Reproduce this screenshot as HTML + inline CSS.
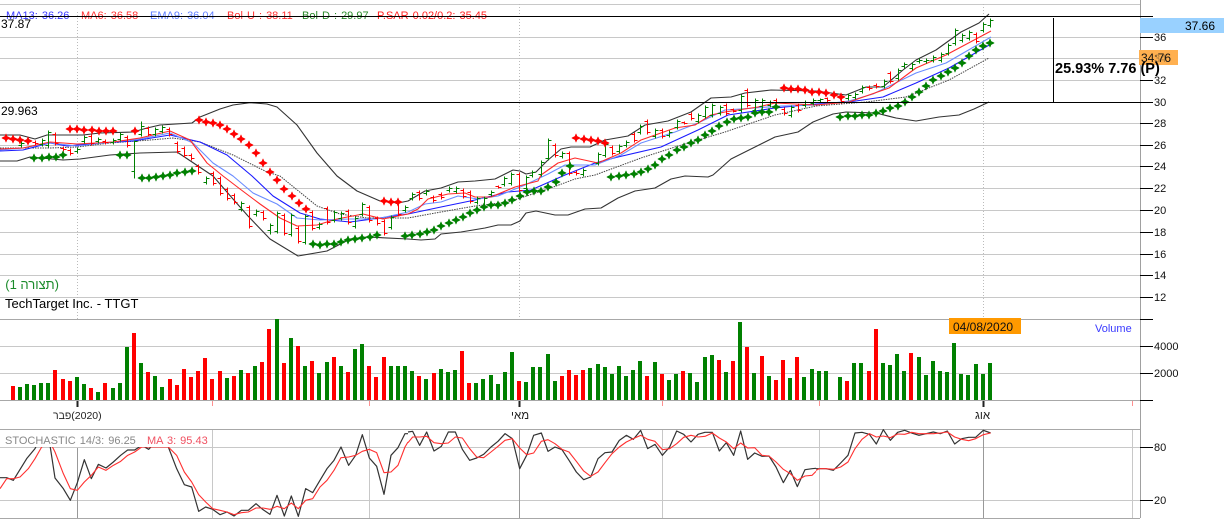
<!DOCTYPE html>
<html>
<head>
<meta charset="utf-8">
<style>
html,body{margin:0;padding:0;background:#fff;width:1224px;height:528px;overflow:hidden}
svg{display:block;font-family:"Liberation Sans",sans-serif}
.nv{vector-effect:non-scaling-stroke;fill:none}
.ax text{font-size:11px;fill:#111}
.lg{font-size:11px;word-spacing:1px}
</style>
</head>
<body>
<svg width="1224" height="528" viewBox="0 0 1224 528" xmlns="http://www.w3.org/2000/svg">
<rect width="1224" height="528" fill="#fff"/>

<!-- grid -->
<g shape-rendering="crispEdges" fill="none">
<path stroke="#c8c8c8" d="M0 4.5H1140M0 37.5H1140M0 58.5H1140M0 80.5H1140M0 123.5H1140M0 145.5H1140M0 166.5H1140M0 188.5H1140M0 210.5H1140M0 232.5H1140M0 254.5H1140M0 275.5H1140M0 297.5H1140M0 346.5H1140M0 373.5H1140"/>
<path stroke="#a8a8a8" d="M0 319.5H1140M0 400.5H1140M0 518.5H1140M0 429.5H1140"/>
<path stroke="#bbb" stroke-dasharray="1 2" d="M77.5 12V319M519.5 4V319M983.5 4V319"/>
</g>

<!-- volume -->
<g shape-rendering="crispEdges">
<path fill="#ff0000" d="M11 386h4V400h-4zM53 370h4V400h-4zM61 379h4V400h-4zM68 381h4V400h-4zM89 388h4V400h-4zM103 383h4V400h-4zM132 333h4V400h-4zM146 372h4V400h-4zM168 379h4V400h-4zM175 385h4V400h-4zM182 369h4V400h-4zM189 377h4V400h-4zM196 371h4V400h-4zM203 358h4V400h-4zM210 379h4V400h-4zM218 371h4V400h-4zM232 376h4V400h-4zM246 373h4V400h-4zM260 362h4V400h-4zM267 329h4V400h-4zM282 363h4V400h-4zM296 346h4V400h-4zM310 361h4V400h-4zM332 357h4V400h-4zM346 372h4V400h-4zM367 366h4V400h-4zM374 377h4V400h-4zM382 357h4V400h-4zM417 376h4V400h-4zM432 373h4V400h-4zM460 351h4V400h-4zM467 383h4V400h-4zM517 381h4V400h-4zM560 376h4V400h-4zM567 370h4V400h-4zM574 375h4V400h-4zM581 370h4V400h-4zM645 376h4V400h-4zM660 374h4V400h-4zM681 371h4V400h-4zM717 360h4V400h-4zM731 361h4V400h-4zM745 347h4V400h-4zM760 356h4V400h-4zM774 380h4V400h-4zM781 360h4V400h-4zM795 357h4V400h-4zM845 381h4V400h-4zM867 371h4V400h-4zM874 329h4V400h-4zM909 353h4V400h-4z"/>
<path fill="#008000" d="M18 387h4V400h-4zM25 384h4V400h-4zM32 385h4V400h-4zM39 383h4V400h-4zM46 383h4V400h-4zM75 377h4V400h-4zM82 384h4V400h-4zM96 392h4V400h-4zM111 388h4V400h-4zM118 383h4V400h-4zM125 347h4V400h-4zM139 363h4V400h-4zM153 376h4V400h-4zM160 387h4V400h-4zM225 378h4V400h-4zM239 370h4V400h-4zM253 366h4V400h-4zM275 319h4V400h-4zM289 338h4V400h-4zM303 366h4V400h-4zM317 373h4V400h-4zM325 362h4V400h-4zM339 366h4V400h-4zM353 349h4V400h-4zM360 344h4V400h-4zM389 366h4V400h-4zM396 366h4V400h-4zM403 366h4V400h-4zM410 371h4V400h-4zM424 379h4V400h-4zM439 369h4V400h-4zM446 372h4V400h-4zM453 370h4V400h-4zM474 383h4V400h-4zM481 379h4V400h-4zM489 375h4V400h-4zM496 384h4V400h-4zM503 372h4V400h-4zM510 352h4V400h-4zM524 382h4V400h-4zM531 367h4V400h-4zM538 367h4V400h-4zM546 354h4V400h-4zM553 381h4V400h-4zM588 368h4V400h-4zM596 364h4V400h-4zM603 367h4V400h-4zM610 374h4V400h-4zM617 366h4V400h-4zM624 376h4V400h-4zM631 370h4V400h-4zM638 361h4V400h-4zM653 362h4V400h-4zM667 380h4V400h-4zM674 374h4V400h-4zM688 373h4V400h-4zM695 382h4V400h-4zM703 357h4V400h-4zM710 355h4V400h-4zM724 372h4V400h-4zM738 322h4V400h-4zM752 373h4V400h-4zM767 376h4V400h-4zM788 378h4V400h-4zM802 377h4V400h-4zM810 369h4V400h-4zM817 371h4V400h-4zM824 371h4V400h-4zM838 377h4V400h-4zM852 363h4V400h-4zM859 363h4V400h-4zM881 363h4V400h-4zM888 365h4V400h-4zM895 354h4V400h-4zM902 371h4V400h-4zM917 357h4V400h-4zM924 375h4V400h-4zM931 361h4V400h-4zM938 371h4V400h-4zM945 372h4V400h-4zM952 343h4V400h-4zM959 374h4V400h-4zM966 375h4V400h-4zM974 364h4V400h-4zM981 374h4V400h-4zM988 363h4V400h-4z"/>
</g>

<!-- bollinger + averages -->
<g fill="none" stroke-linejoin="round">
<polyline stroke="#333" stroke-width="1.1" points="0,135 20,135 35,139 47,135 70,135 83,135 100,133 133,132 147,128 160,125 192,123 200,117 220,109 233,105 250,102.7 267,104 277,107 297,125 317,153 337,176 357,191 380,201 398,203 408,201 425,191 441,188 458,182 475,181 495,179 503,175 513,170 520,171 526,174 536,172 548,160 561,149 571,147 590,147 605,140 628,136 645,125 668,121 691,112 711,98 731,97 745,93 771,90 816,91 846,95 866,87 883,87 903,70 916,60 936,50 961,32 979,23 989,14"/>
<polyline stroke="#333" stroke-width="1.1" points="0,161 17,161 30,157 63,160 80,159 110,155 140,153 177,152 213,176 233,199 248,216 270,239 298,256 327,251 350,239 367,237 408,239 421,240 435,239 441,234 461,232 485,228 498,225 511,225 520,221 526,213 536,211 555,215 568,215 585,209 601,208 618,198 635,191 655,188 671,179 685,176 708,177 713,175 731,159 755,147 775,137 798,132 813,122 833,114 846,112 876,113 896,118 916,121 939,117 959,115 974,109 989,102"/>
<polyline stroke="#444" stroke-width="1" stroke-dasharray="1.5 1" points="0,148 20,148 50,148 77,147 110,143 150,140 173,138 200,142 233,155 267,172 280,176 317,206 340,214 367,218 408,218 441,212 475,206 508,202 548,189 575,179 595,175 641,158 675,147 725,132 775,115 816,106 866,102 906,97 949,80 989,58"/>
<polyline stroke="#1a1aff" stroke-width="1.1" points="0,151 23,150 50,143 67,146 100,143 133,141 170,135 200,142 227,155 252,176 273,196 300,213 320,219 350,222 373,219 408,214 441,207 475,200 508,192 531,190 565,175 595,163 618,157 661,147 698,130 728,115 775,108 816,104 849,102 883,97 916,83 949,68 991,44"/>
<polyline stroke="#6a8cff" stroke-width="1.1" points="0,150 23,148 50,143 77,146 113,142 140,139 170,133 193,143 213,163 233,176 253,193 277,204 297,218 320,220 350,219 377,219 408,212 425,204 441,202 458,196 478,199 498,196 525,185 548,174 565,165 595,165 621,155 641,143 675,132 698,123 725,110 755,108 781,106 816,105 849,101 873,94 916,73 946,63 991,37"/>
<polyline stroke="#ff2a2a" stroke-width="1.1" points="0,149 23,148 50,142 77,144 113,142 140,138 170,131 190,140 207,163 223,176 240,189 260,204 280,218 297,226 317,225 337,219 363,214 383,219 408,214 418,209 428,199 448,194 465,193 475,197 491,197 515,187 538,181 541,175 558,163 575,158 598,163 621,153 641,140 675,128 695,125 711,115 725,112 758,107 775,103 816,105 849,102 889,88 916,68 946,55 991,31"/>
</g>

<!-- OHLC -->
<g fill="none" shape-rendering="crispEdges" stroke-width="1">
<path stroke="#008000" transform="translate(.5 .5)" d="M21 141V147M18 145h3M21 143h3M42 138V146M39 144h3M42 140h3M48 130V147M45 145h3M48 132h3M77 147V153M74 151h3M77 149h3M84 135V143M81 141h3M84 137h3M98 137V143M95 141h3M98 139h3M113 138V144M110 142h3M113 140h3M120 132V141M117 139h3M120 134h3M134 140V178M131 171h3M134 141h3M141 121V136M138 134h3M141 126h3M155 127V136M152 134h3M155 129h3M162 125V133M159 131h3M162 127h3M206 176V184M203 182h3M206 178h3M241 201V211M238 209h3M241 203h3M256 209V216M253 214h3M256 211h3M270 223V234M267 230h3M270 225h3M277 211V233M274 231h3M277 213h3M291 213V236M288 234h3M291 215h3M305 214V244M302 242h3M305 216h3M319 222V229M316 227h3M319 224h3M334 210V222M331 220h3M334 212h3M341 211V220M338 218h3M341 213h3M355 216V228M352 226h3M355 218h3M362 202V216M359 214h3M362 204h3M391 215V229M388 227h3M391 217h3M405 205V212M402 210h3M405 207h3M412 192V200M409 198h3M412 194h3M426 189V195M423 193h3M426 191h3M449 186V192M446 190h3M449 188h3M456 186V193M453 191h3M456 188h3M477 196V204M474 202h3M477 198h3M484 196V208M481 206h3M484 198h3M491 190V196M488 194h3M491 192h3M504 176V186M501 184h3M504 178h3M511 172V185M508 183h3M511 174h3M526 175V190M523 188h3M526 177h3M532 170V177M529 175h3M532 172h3M541 160V176M538 174h3M541 162h3M548 138V160M545 158h3M548 140h3M562 151V158M559 156h3M562 153h3M583 168V176M580 174h3M583 170h3M598 152V165M595 163h3M598 154h3M605 142V157M602 155h3M605 144h3M619 144V153M616 151h3M619 146h3M626 140V147M623 145h3M626 142h3M640 124V134M637 132h3M640 126h3M655 128V138M652 136h3M655 130h3M669 130V137M666 135h3M669 132h3M677 119V129M674 127h3M677 121h3M698 113V123M695 121h3M698 115h3M705 105V118M702 116h3M705 107h3M712 103V117M709 115h3M712 105h3M720 105V115M717 113h3M720 107h3M741 94V112M738 110h3M741 96h3M755 98V112M752 110h3M755 100h3M762 98V108M759 106h3M762 100h3M770 100V107M767 105h3M770 102h3M791 105V117M788 115h3M791 107h3M805 100V107M802 105h3M805 102h3M813 98V105M810 103h3M813 100h3M820 98V102M817 100h3M820 99h3M848 93V100M845 98h3M848 95h3M855 92V99M852 97h3M855 94h3M862 85V93M859 91h3M862 87h3M884 79V88M881 86h3M884 81h3M898 68V80M895 78h3M898 70h3M904 62V68M901 66h3M904 64h3M912 62V70M909 68h3M912 64h3M919 58V63M916 61h3M919 60h3M926 58V63M923 61h3M926 60h3M933 55V62M930 60h3M933 57h3M941 52V62M938 60h3M941 54h3M948 43V55M945 53h3M948 45h3M955 28V45M952 43h3M955 30h3M962 33V42M959 40h3M962 35h3M969 30V40M966 38h3M969 32h3M983 22V32M980 30h3M983 24h3M990 18V27M987 25h3M990 20h3"/>
<path stroke="#ff0000" transform="translate(.5 .5)" d="M35 140V145M32 142h3M35 143h3M55 132V145M52 134h3M55 143h3M63 146V151M60 148h3M63 149h3M70 148V155M67 150h3M70 153h3M91 134V145M88 136h3M91 143h3M105 139V144M102 141h3M105 142h3M127 135V147M124 137h3M127 145h3M148 126V136M145 128h3M148 134h3M169 127V136M166 129h3M169 134h3M177 141V153M174 143h3M177 151h3M184 146V157M181 148h3M184 155h3M191 153V160M188 155h3M191 158h3M198 164V174M195 166h3M198 172h3M213 171V185M210 173h3M213 183h3M220 176V195M217 178h3M220 193h3M227 187V200M224 189h3M227 198h3M234 193V204M231 195h3M234 202h3M249 205V228M246 207h3M249 226h3M263 210V220M260 212h3M263 218h3M284 213V235M281 215h3M284 233h3M298 226V243M295 228h3M298 241h3M312 210V230M309 212h3M312 228h3M327 206V224M324 208h3M327 222h3M348 209V224M345 211h3M348 222h3M369 205V222M366 207h3M369 220h3M377 216V225M374 218h3M377 223h3M384 219V235M381 221h3M384 233h3M398 201V216M395 203h3M398 214h3M419 190V200M416 192h3M419 198h3M433 195V202M430 197h3M433 200h3M441 192V199M438 194h3M441 197h3M463 188V198M460 190h3M463 196h3M470 190V203M467 192h3M470 201h3M498 185V188M495 186h3M498 187h3M519 172V192M516 174h3M519 190h3M555 143V157M552 145h3M555 155h3M569 151V175M566 153h3M569 173h3M576 170V175M573 172h3M576 173h3M612 145V155M609 147h3M612 153h3M634 132V142M631 134h3M634 140h3M647 119V134M644 121h3M647 132h3M662 128V138M659 130h3M662 136h3M684 121V124M681 122h3M684 123h3M691 112V120M688 114h3M691 118h3M726 103V115M723 105h3M726 113h3M733 108V112M730 109h3M733 111h3M747 88V107M744 90h3M747 105h3M776 98V108M773 100h3M776 106h3M784 107V115M781 109h3M784 113h3M798 103V112M795 105h3M798 110h3M827 97V102M824 98h3M827 100h3M841 95V103M838 97h3M841 101h3M869 85V90M866 87h3M869 88h3M876 83V88M873 85h3M876 86h3M890 71V83M887 73h3M890 81h3M976 32V43M973 34h3M976 41h3"/>
</g>

<!-- SAR -->
<g stroke-width=".7" stroke-linejoin="round">
<path fill="#ff0000" stroke="#ff0000" d="M6 134l1 2.500 3 1.500-3 1.500-1 2.500-1-2.500-3-1.500 3-1.500zM13 135l1 2.500 3 1.500-3 1.500-1 2.500-1-2.500-3-1.500 3-1.500zM20 136l1 2.500 3 1.500-3 1.500-1 2.500-1-2.500-3-1.500 3-1.500zM28 137l1 2.500 3 1.500-3 1.500-1 2.500-1-2.500-3-1.500 3-1.500zM70 125l1 2.500 3 1.500-3 1.500-1 2.500-1-2.500-3-1.500 3-1.500zM77 125l1 2.500 3 1.500-3 1.500-1 2.500-1-2.500-3-1.500 3-1.500zM84 126l1 2.500 3 1.500-3 1.500-1 2.500-1-2.500-3-1.500 3-1.500zM92 126l1 2.500 3 1.500-3 1.500-1 2.500-1-2.500-3-1.500 3-1.500zM99 127l1 2.500 3 1.500-3 1.500-1 2.500-1-2.500-3-1.500 3-1.500zM106 127l1 2.500 3 1.500-3 1.500-1 2.500-1-2.500-3-1.500 3-1.500zM113 127l1 2.500 3 1.500-3 1.500-1 2.500-1-2.500-3-1.500 3-1.500zM135 127l1 2.500 3 1.500-3 1.500-1 2.500-1-2.500-3-1.500 3-1.500zM199 116l1 2.500 3 1.500-3 1.500-1 2.500-1-2.500-3-1.500 3-1.500zM206 118l1 2.500 3 1.500-3 1.500-1 2.500-1-2.500-3-1.500 3-1.500zM213 119l1 2.500 3 1.500-3 1.500-1 2.500-1-2.500-3-1.500 3-1.500zM220 121l1 2.500 3 1.500-3 1.500-1 2.500-1-2.500-3-1.500 3-1.500zM227 125l1 2.500 3 1.500-3 1.500-1 2.500-1-2.500-3-1.500 3-1.500zM234 130l1 2.500 3 1.500-3 1.500-1 2.500-1-2.500-3-1.500 3-1.500zM241 135l1 2.500 3 1.500-3 1.500-1 2.500-1-2.500-3-1.500 3-1.500zM249 141l1 2.500 3 1.500-3 1.500-1 2.500-1-2.500-3-1.500 3-1.500zM256 149l1 2.500 3 1.500-3 1.500-1 2.500-1-2.500-3-1.500 3-1.500zM263 159l1 2.500 3 1.500-3 1.500-1 2.500-1-2.500-3-1.500 3-1.500zM270 168l1 2.500 3 1.500-3 1.500-1 2.500-1-2.500-3-1.500 3-1.500zM277 176l1 2.500 3 1.500-3 1.500-1 2.500-1-2.500-3-1.500 3-1.500zM284 185l1 2.500 3 1.500-3 1.500-1 2.500-1-2.500-3-1.500 3-1.500zM292 192l1 2.500 3 1.500-3 1.500-1 2.500-1-2.500-3-1.500 3-1.500zM299 199l1 2.500 3 1.500-3 1.500-1 2.500-1-2.500-3-1.500 3-1.500zM306 205l1 2.500 3 1.500-3 1.500-1 2.500-1-2.500-3-1.500 3-1.500zM384 197l1 2.500 3 1.500-3 1.500-1 2.500-1-2.500-3-1.500 3-1.500zM391 198l1 2.500 3 1.500-3 1.500-1 2.500-1-2.500-3-1.500 3-1.500zM398 198l1 2.500 3 1.500-3 1.500-1 2.500-1-2.500-3-1.500 3-1.500zM576 134l1 2.500 3 1.500-3 1.500-1 2.500-1-2.500-3-1.500 3-1.500zM584 135l1 2.500 3 1.500-3 1.500-1 2.500-1-2.500-3-1.500 3-1.500zM591 136l1 2.500 3 1.500-3 1.500-1 2.500-1-2.500-3-1.500 3-1.500zM598 137l1 2.500 3 1.500-3 1.500-1 2.500-1-2.500-3-1.500 3-1.500zM605 139l1 2.500 3 1.500-3 1.500-1 2.500-1-2.500-3-1.500 3-1.500zM784 84l1 2.500 3 1.500-3 1.500-1 2.500-1-2.500-3-1.500 3-1.500zM791 85l1 2.500 3 1.500-3 1.500-1 2.500-1-2.500-3-1.500 3-1.500zM798 85l1 2.500 3 1.500-3 1.500-1 2.500-1-2.500-3-1.500 3-1.500zM805 86l1 2.500 3 1.500-3 1.500-1 2.500-1-2.500-3-1.500 3-1.500zM812 88l1 2.500 3 1.500-3 1.500-1 2.500-1-2.500-3-1.500 3-1.500zM819 88l1 2.500 3 1.500-3 1.500-1 2.500-1-2.500-3-1.500 3-1.500zM826 89l1 2.500 3 1.500-3 1.500-1 2.500-1-2.500-3-1.500 3-1.500zM834 91l1 2.500 3 1.500-3 1.500-1 2.500-1-2.500-3-1.500 3-1.500zM841 93l1 2.500 3 1.500-3 1.500-1 2.500-1-2.500-3-1.500 3-1.500z"/>
<path fill="#008000" stroke="#008000" d="M34 154l1 2.500 3 1.500-3 1.500-1 2.500-1-2.500-3-1.500 3-1.500zM42 154l1 2.500 3 1.500-3 1.500-1 2.500-1-2.500-3-1.500 3-1.500zM49 153l1 2.500 3 1.500-3 1.500-1 2.500-1-2.500-3-1.500 3-1.500zM56 153l1 2.500 3 1.500-3 1.500-1 2.500-1-2.500-3-1.500 3-1.500zM63 151l1 2.500 3 1.500-3 1.500-1 2.500-1-2.500-3-1.500 3-1.500zM120 151l1 2.500 3 1.500-3 1.500-1 2.500-1-2.500-3-1.500 3-1.500zM127 151l1 2.500 3 1.500-3 1.500-1 2.500-1-2.500-3-1.500 3-1.500zM142 174l1 2.500 3 1.500-3 1.500-1 2.500-1-2.500-3-1.500 3-1.500zM149 174l1 2.500 3 1.500-3 1.500-1 2.500-1-2.500-3-1.500 3-1.500zM156 173l1 2.500 3 1.500-3 1.500-1 2.500-1-2.500-3-1.500 3-1.500zM163 172l1 2.500 3 1.500-3 1.500-1 2.500-1-2.500-3-1.500 3-1.500zM170 171l1 2.500 3 1.500-3 1.500-1 2.500-1-2.500-3-1.500 3-1.500zM177 169l1 2.500 3 1.500-3 1.500-1 2.500-1-2.500-3-1.500 3-1.500zM185 168l1 2.500 3 1.500-3 1.500-1 2.500-1-2.500-3-1.500 3-1.500zM192 167l1 2.500 3 1.500-3 1.500-1 2.500-1-2.500-3-1.500 3-1.500zM313 240l1 2.500 3 1.500-3 1.500-1 2.500-1-2.500-3-1.500 3-1.500zM320 241l1 2.500 3 1.500-3 1.500-1 2.500-1-2.500-3-1.500 3-1.500zM327 240l1 2.500 3 1.500-3 1.500-1 2.500-1-2.500-3-1.500 3-1.500zM334 240l1 2.500 3 1.500-3 1.500-1 2.500-1-2.500-3-1.500 3-1.500zM341 238l1 2.500 3 1.500-3 1.500-1 2.500-1-2.500-3-1.500 3-1.500zM348 236l1 2.500 3 1.500-3 1.500-1 2.500-1-2.500-3-1.500 3-1.500zM355 235l1 2.500 3 1.500-3 1.500-1 2.500-1-2.500-3-1.500 3-1.500zM362 234l1 2.500 3 1.500-3 1.500-1 2.500-1-2.500-3-1.500 3-1.500zM370 233l1 2.500 3 1.500-3 1.500-1 2.500-1-2.500-3-1.500 3-1.500zM377 231l1 2.500 3 1.500-3 1.500-1 2.500-1-2.500-3-1.500 3-1.500zM405 232l1 2.500 3 1.500-3 1.500-1 2.500-1-2.500-3-1.500 3-1.500zM412 231l1 2.500 3 1.500-3 1.500-1 2.500-1-2.500-3-1.500 3-1.500zM420 230l1 2.500 3 1.500-3 1.500-1 2.500-1-2.500-3-1.500 3-1.500zM427 228l1 2.500 3 1.500-3 1.500-1 2.500-1-2.500-3-1.500 3-1.500zM434 226l1 2.500 3 1.500-3 1.500-1 2.500-1-2.500-3-1.500 3-1.500zM441 222l1 2.500 3 1.500-3 1.500-1 2.500-1-2.500-3-1.500 3-1.500zM449 219l1 2.500 3 1.500-3 1.500-1 2.500-1-2.500-3-1.500 3-1.500zM456 216l1 2.500 3 1.500-3 1.500-1 2.500-1-2.500-3-1.500 3-1.500zM463 213l1 2.500 3 1.500-3 1.500-1 2.500-1-2.500-3-1.500 3-1.500zM470 209l1 2.500 3 1.500-3 1.500-1 2.500-1-2.500-3-1.500 3-1.500zM477 206l1 2.500 3 1.500-3 1.500-1 2.500-1-2.500-3-1.500 3-1.500zM484 203l1 2.500 3 1.500-3 1.500-1 2.500-1-2.500-3-1.500 3-1.500zM491 201l1 2.500 3 1.500-3 1.500-1 2.500-1-2.500-3-1.500 3-1.500zM498 201l1 2.500 3 1.500-3 1.500-1 2.500-1-2.500-3-1.500 3-1.500zM505 199l1 2.500 3 1.500-3 1.500-1 2.500-1-2.500-3-1.500 3-1.500zM512 196l1 2.500 3 1.500-3 1.500-1 2.500-1-2.500-3-1.500 3-1.500zM520 192l1 2.500 3 1.500-3 1.500-1 2.500-1-2.500-3-1.500 3-1.500zM527 188l1 2.500 3 1.500-3 1.500-1 2.500-1-2.500-3-1.500 3-1.500zM534 187l1 2.500 3 1.500-3 1.500-1 2.500-1-2.500-3-1.500 3-1.500zM541 187l1 2.500 3 1.500-3 1.500-1 2.500-1-2.500-3-1.500 3-1.500zM548 183l1 2.500 3 1.500-3 1.500-1 2.500-1-2.500-3-1.500 3-1.500zM556 178l1 2.500 3 1.500-3 1.500-1 2.500-1-2.500-3-1.500 3-1.500zM562 169l1 2.500 3 1.500-3 1.500-1 2.500-1-2.500-3-1.500 3-1.500zM570 162l1 2.500 3 1.500-3 1.500-1 2.500-1-2.500-3-1.500 3-1.500zM611 173l1 2.500 3 1.500-3 1.500-1 2.500-1-2.500-3-1.500 3-1.500zM619 172l1 2.500 3 1.500-3 1.500-1 2.500-1-2.500-3-1.500 3-1.500zM626 171l1 2.500 3 1.500-3 1.500-1 2.500-1-2.500-3-1.500 3-1.500zM634 170l1 2.500 3 1.500-3 1.500-1 2.500-1-2.500-3-1.500 3-1.500zM641 168l1 2.500 3 1.500-3 1.500-1 2.500-1-2.500-3-1.500 3-1.500zM648 165l1 2.500 3 1.500-3 1.500-1 2.500-1-2.500-3-1.500 3-1.500zM655 161l1 2.500 3 1.500-3 1.500-1 2.500-1-2.500-3-1.500 3-1.500zM662 155l1 2.500 3 1.500-3 1.500-1 2.500-1-2.500-3-1.500 3-1.500zM669 151l1 2.500 3 1.500-3 1.500-1 2.500-1-2.500-3-1.500 3-1.500zM677 146l1 2.500 3 1.500-3 1.500-1 2.500-1-2.500-3-1.500 3-1.500zM684 143l1 2.500 3 1.500-3 1.500-1 2.500-1-2.500-3-1.500 3-1.500zM691 139l1 2.500 3 1.500-3 1.500-1 2.500-1-2.500-3-1.500 3-1.500zM698 136l1 2.500 3 1.500-3 1.500-1 2.500-1-2.500-3-1.500 3-1.500zM705 131l1 2.500 3 1.500-3 1.500-1 2.500-1-2.500-3-1.500 3-1.500zM712 127l1 2.500 3 1.500-3 1.500-1 2.500-1-2.500-3-1.500 3-1.500zM719 122l1 2.500 3 1.500-3 1.500-1 2.500-1-2.500-3-1.500 3-1.500zM727 118l1 2.500 3 1.500-3 1.500-1 2.500-1-2.500-3-1.500 3-1.500zM734 115l1 2.500 3 1.500-3 1.500-1 2.500-1-2.500-3-1.500 3-1.500zM741 114l1 2.500 3 1.500-3 1.500-1 2.500-1-2.500-3-1.500 3-1.500zM748 113l1 2.500 3 1.500-3 1.500-1 2.500-1-2.500-3-1.500 3-1.500zM755 109l1 2.500 3 1.500-3 1.500-1 2.500-1-2.500-3-1.500 3-1.500zM762 108l1 2.500 3 1.500-3 1.500-1 2.500-1-2.500-3-1.500 3-1.500zM769 108l1 2.500 3 1.500-3 1.500-1 2.500-1-2.500-3-1.500 3-1.500zM776 103l1 2.500 3 1.500-3 1.500-1 2.500-1-2.500-3-1.500 3-1.500zM840 113l1 2.500 3 1.500-3 1.500-1 2.500-1-2.500-3-1.500 3-1.500zM848 112l1 2.500 3 1.500-3 1.500-1 2.500-1-2.500-3-1.500 3-1.500zM855 112l1 2.500 3 1.500-3 1.500-1 2.500-1-2.500-3-1.500 3-1.500zM862 111l1 2.500 3 1.500-3 1.500-1 2.500-1-2.500-3-1.500 3-1.500zM869 111l1 2.500 3 1.500-3 1.500-1 2.500-1-2.500-3-1.500 3-1.500zM876 109l1 2.500 3 1.500-3 1.500-1 2.500-1-2.500-3-1.500 3-1.500zM883 107l1 2.500 3 1.500-3 1.500-1 2.500-1-2.500-3-1.500 3-1.500zM890 104l1 2.500 3 1.500-3 1.500-1 2.500-1-2.500-3-1.500 3-1.500zM898 102l1 2.500 3 1.500-3 1.500-1 2.500-1-2.500-3-1.500 3-1.500zM905 98l1 2.500 3 1.500-3 1.500-1 2.500-1-2.500-3-1.500 3-1.500zM912 93l1 2.500 3 1.500-3 1.500-1 2.500-1-2.500-3-1.500 3-1.500zM919 88l1 2.500 3 1.500-3 1.500-1 2.500-1-2.500-3-1.500 3-1.500zM926 82l1 2.500 3 1.500-3 1.500-1 2.500-1-2.500-3-1.500 3-1.500zM933 76l1 2.500 3 1.500-3 1.500-1 2.500-1-2.500-3-1.500 3-1.500zM941 72l1 2.500 3 1.500-3 1.500-1 2.500-1-2.500-3-1.500 3-1.500zM948 68l1 2.500 3 1.500-3 1.500-1 2.500-1-2.500-3-1.500 3-1.500zM955 64l1 2.500 3 1.500-3 1.500-1 2.500-1-2.500-3-1.500 3-1.500zM962 59l1 2.500 3 1.500-3 1.500-1 2.500-1-2.500-3-1.500 3-1.500zM969 52l1 2.500 3 1.500-3 1.500-1 2.500-1-2.500-3-1.500 3-1.500zM976 46l1 2.500 3 1.500-3 1.500-1 2.500-1-2.500-3-1.500 3-1.500zM983 42l1 2.500 3 1.500-3 1.500-1 2.500-1-2.500-3-1.500 3-1.500zM990 39l1 2.500 3 1.500-3 1.500-1 2.500-1-2.500-3-1.500 3-1.500z"/>
</g>

<!-- stochastic panel -->
<g shape-rendering="crispEdges" fill="none">
<path stroke="#c8c8c8" d="M0 447.500H1140M0 500.500H1140M212.500 430V518M369.500 430V518M662.500 430V518M819.500 430V518M1132.500 430V518"/>
<path stroke="#999" d="M77.500 448V518M519.500 430V518M983.500 430V518"/>
<path stroke="#ff9090" d="M212.500 401V406M369.500 401V406M662.500 401V406M819.500 401V406M1132.500 401V406"/>
<path stroke="#222" stroke-width="2" d="M77.500 401V407M519.500 401V407M983.500 401V407"/>
</g>
<g fill="none" stroke-linejoin="round">
<g transform="translate(0 352) scale(.33333)">
<polyline class="nv" stroke="#333" stroke-width="1.2" points="0,377 20,377 40,385 80,320 105,290 125,250 150,280 165,378 190,410 211,445 232,392 253,323 274,380 295,337 318,348 340,330 362,310 383,294 404,294 425,280 446,292 467,270 489,250 505,285 530,350 553,398 575,405 596,478 617,465 638,472 660,488 681,480 702,492 724,475 745,475 768,455 789,473 810,487 831,430 853,492 874,432 895,493 917,410 938,422 960,385 981,350 1002,325 1023,285 1046,340 1067,310 1087,248 1108,318 1130,343 1152,427 1173,310 1194,287 1215,245 1224,245"/>
<polyline class="nv" stroke="#ff3030" stroke-width="1.1" points="0,410 20,380 40,380 60,375 85,350 105,320 125,285 150,270 165,300 190,365 211,410 232,415 253,390 274,370 295,345 318,355 340,340 362,328 383,310 404,300 425,285 446,285 505,285 530,310 553,360 575,390 596,428 617,450 638,470 660,475 681,480 702,488 724,482 745,480 768,468 789,468 810,472 831,463 853,470 874,453 895,470 917,445 938,440 960,405 981,385 1002,355 1023,317 1046,315 1067,310 1087,298 1108,292 1130,302 1152,362 1173,360 1194,340 1215,285 1224,270"/>
</g>
<g transform="translate(408 352) scale(.33333)">
<polyline class="nv" stroke="#333" stroke-width="1.2" points="0,240 14,238 35,280 56,240 78,297 100,283 121,240 142,240 163,292 185,325 206,318 227,307 249,285 270,268 291,245 313,260 335,350 356,310 377,250 400,243 420,298 441,285 462,293 483,325 505,360 527,383 548,375 570,320 591,302 612,300 634,265 655,250 676,262 698,235 719,290 741,277 763,310 785,285 806,237 827,247 849,270 870,247 891,241 913,241 934,297 955,272 977,310 998,237 1019,322 1040,303 1062,313 1083,312 1104,345 1126,392 1147,355 1168,404 1191,353 1212,350 1224,349"/>
<polyline class="nv" stroke="#ff3030" stroke-width="1.1" points="0,272 14,255 35,255 56,253 78,272 100,275 121,273 142,255 163,258 185,290 206,315 227,317 249,300 270,283 291,265 313,260 335,288 356,308 377,303 400,268 420,263 441,275 462,292 483,300 505,328 527,357 548,373 570,360 591,332 612,305 634,285 655,270 676,260 698,250 719,262 741,268 763,293 785,290 806,275 827,256 849,250 870,255 891,253 913,243 934,258 955,270 977,290 998,273 1019,288 1040,287 1062,310 1083,312 1104,330 1126,352 1147,365 1168,385 1191,372 1212,370 1224,358"/>
</g>
<g transform="translate(816 352) scale(.33333)">
<polyline class="nv" stroke="#333" stroke-width="1.2" points="0,350 30,350 52,355 74,333 96,310 117,243 138,241 160,247 181,276 202,233 223,265 245,241 266,235 287,243 309,250 352,240 373,245 394,237 416,276 437,260 458,256 479,256 502,235 524,243"/>
<polyline class="nv" stroke="#ff3030" stroke-width="1.1" points="0,355 10,350 30,350 52,352 74,345 96,330 117,290 138,262 160,245 181,255 202,252 223,257 245,246 266,247 287,241 309,245 352,245 373,243 394,240 416,255 437,262 458,266 479,260 502,248 524,243"/>
</g>
</g>
<rect x="0" y="431" width="212" height="16" fill="#fff"/>

<!-- legends -->
<text class="lg" x="6" y="19" fill="#3a3aff">MA13: 36.26</text>
<text class="lg" x="81" y="19" fill="#ff3333">MA6: 36.58</text>
<text class="lg" x="150" y="19" fill="#5f7fff">EMA9: 36.04</text>
<text class="lg" x="227" y="19" fill="#ff3333">Bol U : 38.11</text>
<text class="lg" x="302" y="19" fill="#2a8a2a">Bol D : 29.97</text>
<text class="lg" x="377" y="19" fill="#ff2020">P.SAR 0.02/0.2: 35.45</text>

<!-- right axis -->
<g shape-rendering="crispEdges" fill="none">
<path stroke="#a0a0a0" d="M1140.500 0V518"/>
<path stroke="#000" d="M1140 37.500H1153M1140 58.500H1153M1140 80.500H1153M1140 123.500H1153M1140 145.500H1153M1140 166.500H1153M1140 188.500H1153M1140 210.500H1153M1140 232.500H1153M1140 254.500H1153M1140 275.500H1153M1140 297.500H1153M1140 319.500H1153M1140 346.500H1153M1140 373.500H1153M1140 400.500H1153M1140 447.500H1153M1140 500.500H1153"/>
<path stroke="#000" d="M0 16.500H1153M0 102.500H1153M1053.500 18V102"/>
</g>

<g class="ax">
<text x="1154" y="41">36</text>
<text x="1154" y="84">32</text>
<text x="1154" y="106">30</text>
<text x="1154" y="127">28</text>
<text x="1154" y="149">26</text>
<text x="1154" y="170">24</text>
<text x="1154" y="192">22</text>
<text x="1154" y="214">20</text>
<text x="1154" y="236">18</text>
<text x="1154" y="258">16</text>
<text x="1154" y="279">14</text>
<text x="1154" y="301">12</text>
<text x="1154" y="350">4000</text>
<text x="1154" y="377">2000</text>
<text x="1154" y="451">80</text>
<text x="1154" y="504">20</text>
</g>

<rect x="1140" y="18" width="84" height="15" fill="#99d1ff"/>
<text x="1185" y="30" font-size="12" fill="#000">37.66</text>
<rect x="1139" y="50" width="39" height="15" fill="#ffb050"/>
<text x="1154" y="62" font-size="11" fill="#b08040">34</text>
<text x="1141" y="62" font-size="12" fill="#111">34:76</text>

<text x="1" y="28" font-size="12" fill="#000">37.87</text>
<text x="1" y="115" font-size="12" fill="#000">29.963</text>
<text x="1055" y="73" font-size="14.500" font-weight="700" fill="#000">25.93% 7.76 (P)</text>

<text x="59" y="289" font-size="13" direction="rtl" fill="#1a8a2a">(תצורה 1)</text>
<text x="5" y="308" font-size="13" fill="#000">TechTarget Inc. - TTGT</text>

<rect x="949" y="318" width="72" height="16" fill="#ff9900"/>
<text x="953" y="331" font-size="12" fill="#111">04/08/2020</text>
<text x="1095" y="332" font-size="11" fill="#3a3aff">Volume</text>

<text x="53" y="419" font-size="10.500" fill="#222">פבר&#8206;(2020)</text>
<text x="511" y="419" font-size="11.500" fill="#222">מאי</text>
<text x="975" y="419" font-size="11.500" fill="#222">אוג</text>

<text x="5" y="444" font-size="11" word-spacing="1" fill="#888">STOCHASTIC 14/3: 96.25</text>
<text x="147" y="444" font-size="11" word-spacing="1" fill="#f05060">MA 3: 95.43</text>
</svg>
</body>
</html>
